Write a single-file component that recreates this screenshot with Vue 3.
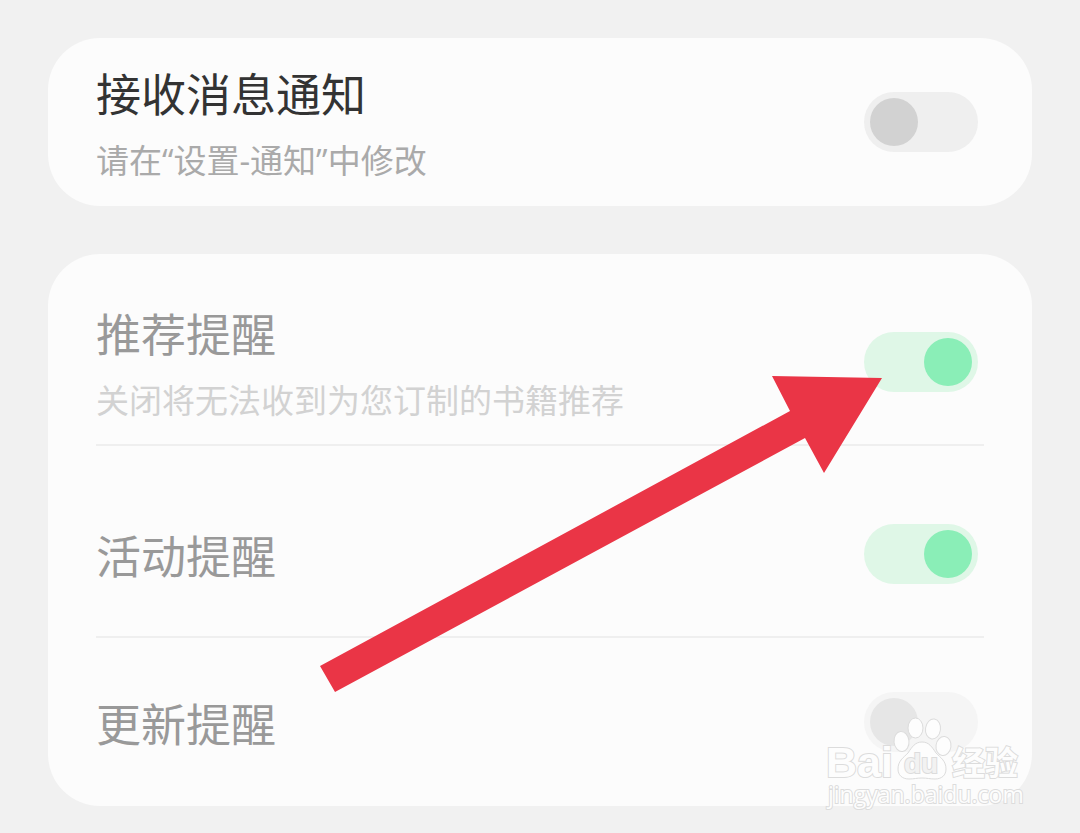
<template>
  <main class="settings">
    <section class="card">
      <div class="row">
        <label class="texts" for="receive">
          <span class="title strong">接收消息通知</span>
          <span class="hint">请在“设置-通知”中修改</span>
        </label>
        <input id="receive" v-model="receive" class="switch" type="checkbox" />
      </div>
    </section>

    <section class="card">
      <div v-for="item in items" :key="item.id" class="row dimmed">
        <label class="texts" :for="item.id">
          <span class="title">{{ item.title }}</span>
          <span v-if="item.hint" class="hint">{{ item.hint }}</span>
        </label>
        <input :id="item.id" v-model="item.on" class="switch" type="checkbox" />
      </div>

      <svg class="arrow" width="562" height="317" viewBox="0 0 562 317" aria-hidden="true">
        <path d="M0 290 L470 35 L452 0 L562 2 L504 97 L485 62 L15 316 Z" fill="#ea3546" />
      </svg>

      <svg class="watermark" width="208" height="100" viewBox="0 0 208 100">
        <g class="mark">
          <text class="latin" x="2" y="65" font-size="43">Bai</text>
          <ellipse cx="91.5" cy="16" rx="7.5" ry="10" />
          <ellipse cx="109" cy="17" rx="7.5" ry="10" transform="rotate(8 109 17)" />
          <ellipse cx="77.5" cy="29.5" rx="7.5" ry="10" transform="rotate(-6 77.5 29.5)" />
          <ellipse cx="119.500" cy="34" rx="7.500" ry="9.500" transform="rotate(8 119.500 34)" />
          <path d="M98 30 C105 30 108 35 112 41 C117 46 122 49 122 57 C122 63 118 67 111 67 C106 67 103 66 98 66 C93 66 90 67 85 67 C78 67 74 63 74 57 C74 49 79 46 84 41 C88 35 91 30 98 30 Z" />
          <text class="latin du" x="80" y="61" font-size="28">du</text>
          <text class="cjk" x="128" y="63" font-size="33">经验</text>
          <text class="site" x="4" y="91" font-size="23">jingyan.baidu.com</text>
        </g>
      </svg>
    </section>
  </main>
</template>

<script setup>
import { ref } from 'vue';

// --- State ---

const receive = ref(false);

const items = ref([
  { id: 'recommend', title: '推荐提醒', hint: '关闭将无法收到为您订制的书籍推荐', on: true },
  { id: 'activity', title: '活动提醒', hint: '', on: true },
  { id: 'update', title: '更新提醒', hint: '', on: false },
]);
</script>

<style>
body {
  margin: 0;
  background: #f1f1f1;
}
</style>

<style scoped>
.settings {
  display: flex;
  flex-direction: column;
  gap: 48px;
  padding: 38px 48px 27px;
  font-family: "Open Sans", "Noto Sans CJK SC", sans-serif;
}

.card {
  position: relative;
  padding: 0 48px;
  border-radius: 52px;
  background: #fcfcfc;
}

.row {
  display: flex;
  align-items: center;
  justify-content: space-between;
  box-sizing: border-box;
  min-height: 168px;
  padding-right: 6px;
}

/* Rows followed by another one get a divider and extra room on top */
.row:has(+ .row) {
  min-height: 192px;
  padding-top: 24px;
  background: linear-gradient(#efefef, #efefef) bottom / 100% 2px no-repeat;
}

.texts {
  display: flex;
  flex-direction: column;
  gap: 12px;
  padding-top: 6px;
}

.title {
  font-size: 45px;
  line-height: 60px;
  font-weight: 400;
  color: #999;
}

.title.strong {
  color: #333;
}

.hint {
  font-size: 33px;
  line-height: 48px;
  font-weight: 400;
  color: #aaa;
}

.dimmed .hint {
  color: #d2d2d2;
}

.switch {
  appearance: none;
  flex: none;
  box-sizing: border-box;
  display: flex;
  width: 114px;
  height: 60px;
  margin: 0;
  padding: 6px;
  border-radius: 30px;
  background: #efefef;
  cursor: pointer;
}

.switch::before {
  content: "";
  width: 48px;
  height: 48px;
  border-radius: 50%;
  background: #d2d2d2;
}

.switch:checked {
  justify-content: flex-end;
  background: #dff7e7;
}

.switch:checked::before {
  background: #8aeeb7;
}

.dimmed .switch:not(:checked) {
  background: #f5f5f5;
}

.dimmed .switch:not(:checked)::before {
  background: #e6e6e6;
}

.arrow {
  position: absolute;
  left: 272px;
  top: 122px;
  pointer-events: none;
}

.watermark {
  position: absolute;
  right: 0;
  bottom: -6px;
  overflow: visible;
  pointer-events: none;
}

.mark {
  fill: #fdfdfd;
  stroke: #dcdcdc;
  stroke-width: 1;
}

.mark text {
  stroke-width: 2;
  paint-order: stroke;
}

.latin {
  font-family: "Liberation Sans", sans-serif;
  font-weight: 700;
}

.du {
  fill: #f2f2f2;
}

.cjk {
  font-family: "Noto Sans CJK SC", sans-serif;
  font-weight: 700;
}

.site {
  font-family: "Open Sans", sans-serif;
}
</style>
